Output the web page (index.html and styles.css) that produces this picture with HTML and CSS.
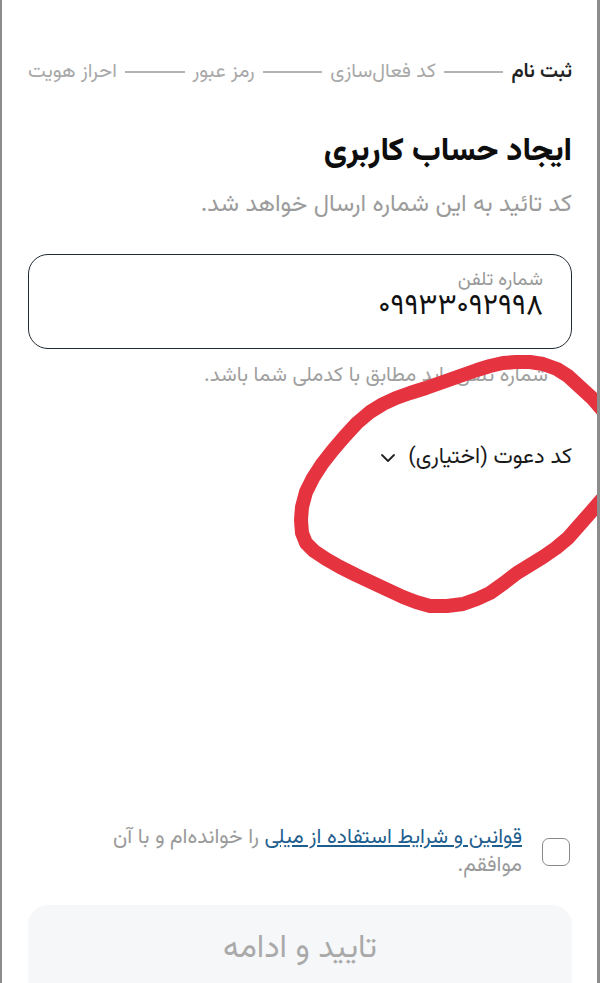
FILE: index.html
```html
<!DOCTYPE html>
<html lang="fa" dir="rtl">
<head>
<meta charset="utf-8">
<title>ایجاد حساب کاربری</title>
<link rel="stylesheet" href="styles.css">
</head>
<body>
<div class="page">
  <nav class="stepper">
    <span class="step active">ثبت نام</span>
    <span class="line"></span>
    <span class="step">کد فعال‌سازی</span>
    <span class="line"></span>
    <span class="step">رمز عبور</span>
    <span class="line"></span>
    <span class="step">احراز هویت</span>
  </nav>

  <h1 class="title">ایجاد حساب کاربری</h1>
  <p class="subtitle">کد تائید به این شماره ارسال خواهد شد.</p>

  <div class="field">
    <span class="field-label">شماره تلفن</span>
    <span class="field-value">۰۹۹۳۳۰۹۲۹۹۸</span>
  </div>
  <p class="hint">شماره تلفن باید مطابق با کدملی شما باشد.</p>

  <div class="invite">
    <span>کد دعوت (اختیاری)</span>
    <svg class="chev" width="16" height="16" viewBox="0 0 16 16"><polyline points="2,5 8,11 14,5" fill="none" stroke="#222" stroke-width="1.8" stroke-linecap="round" stroke-linejoin="round"/></svg>
  </div>

  <div class="terms">
    <span class="checkbox"></span>
    <p class="terms-text"><a class="link" href="#">قوانین و شرایط استفاده از میلی</a> را خوانده‌ام و با آن موافقم.</p>
  </div>

  <div class="btn">تایید و ادامه</div>

  <svg class="scribble" width="600" height="983" viewBox="0 0 600 983">
    <polyline points="604,412 592,398 580,387 568,376 557,369 543,364 530,362 516,362 503,363 490,366 477,370 460,376 443,382 426,388 410,393 396,398 383,404 370,412 357,423 345,436 333,450 322,464 313,478 306,492 302,507 301,520 302,533 306,543 314,551 326,559 340,567 356,575 373,583 388,590 403,597 416,602 430,606 447,606 463,604 477,599 490,593 504,583 517,573 530,565 543,557 556,548 568,538 583,521 604,497" fill="none" stroke="#e5333f" stroke-width="14" stroke-linecap="round" stroke-linejoin="round"/>
  </svg>
</div>
</body>
</html>
```

FILE: styles.css
```css
* { box-sizing: border-box; }
html, body { margin: 0; padding: 0; }
body {
  width: 600px;
  height: 983px;
  overflow: hidden;
  background: #fff;
  font-family: "Vazirmatn", "Noto Sans Arabic", "DejaVu Sans", sans-serif;
  color: #1a1a1a;
}
.page {
  position: relative;
  width: 600px;
  height: 983px;
  border-left: 2px solid #8c8c8c;
  border-right: 3px solid #8c8c8c;
  padding: 0 25px 0 26px;
  overflow: hidden;
}
.stepper {
  display: flex;
  align-items: center;
  gap: 8px;
  padding-top: 58px;
  height: 86px;
  font-size: 20px;
  line-height: 28px;
  white-space: nowrap;
}
.step { color: #a8a8a8; }
.step.active { color: #222; font-weight: 600; }
.line {
  flex: 1 1 56px;
  height: 2px;
  background: #b3b3b3;
}
.title {
  margin: 46px 0 0 0;
  font-size: 32px;
  font-weight: 800;
  line-height: 40px;
  color: #0d0d0d;
}
.subtitle {
  margin: 18px 0 0 0;
  font-size: 24px;
  line-height: 30px;
  color: #9b9b9b;
}
.field {
  margin-top: 34px;
  height: 95px;
  border: 1.5px solid #222a33;
  border-radius: 20px;
  padding: 14px 28px 0 28px;
  display: flex;
  flex-direction: column;
}
.field-label {
  font-size: 19px;
  line-height: 23px;
  color: #9a9a9a;
}
.field-value {
  font-size: 29px;
  line-height: 31px;
  color: #111;
  letter-spacing: 0.5px;
}
.hint {
  margin: 13px 24px 0 0;
  font-size: 20.5px;
  line-height: 28px;
  color: #a0a0a0;
}
.invite {
  margin-top: 53px;
  display: flex;
  align-items: center;
  gap: 12px;
  font-size: 22px;
  color: #1a1a1a;
  line-height: 30px;
}
.chev { display: block; }
.terms {
  margin-top: 351px;
  display: flex;
  align-items: flex-start;
  gap: 20px;
  padding-right: 2px;
}
.checkbox {
  flex: 0 0 28px;
  width: 28px;
  height: 28px;
  margin-top: 14px;
  border: 1.5px solid #8a8a8a;
  border-radius: 7px;
}
.terms-text {
  margin: 0;
  font-size: 21px;
  line-height: 28px;
  color: #9a9a9a;
  max-width: 440px;
}
.link {
  color: #1f5f8f;
  text-decoration: underline;
}
.btn {
  margin-top: 25px;
  height: 100px;
  border-radius: 20px;
  background: #f6f7f9;
  color: #a9a9a9;
  font-size: 32px;
  line-height: 38px;
  display: flex;
  justify-content: center;
  padding-top: 25px;
}
.scribble {
  position: absolute;
  left: -2px;
  top: 0;
  pointer-events: none;
}
```
